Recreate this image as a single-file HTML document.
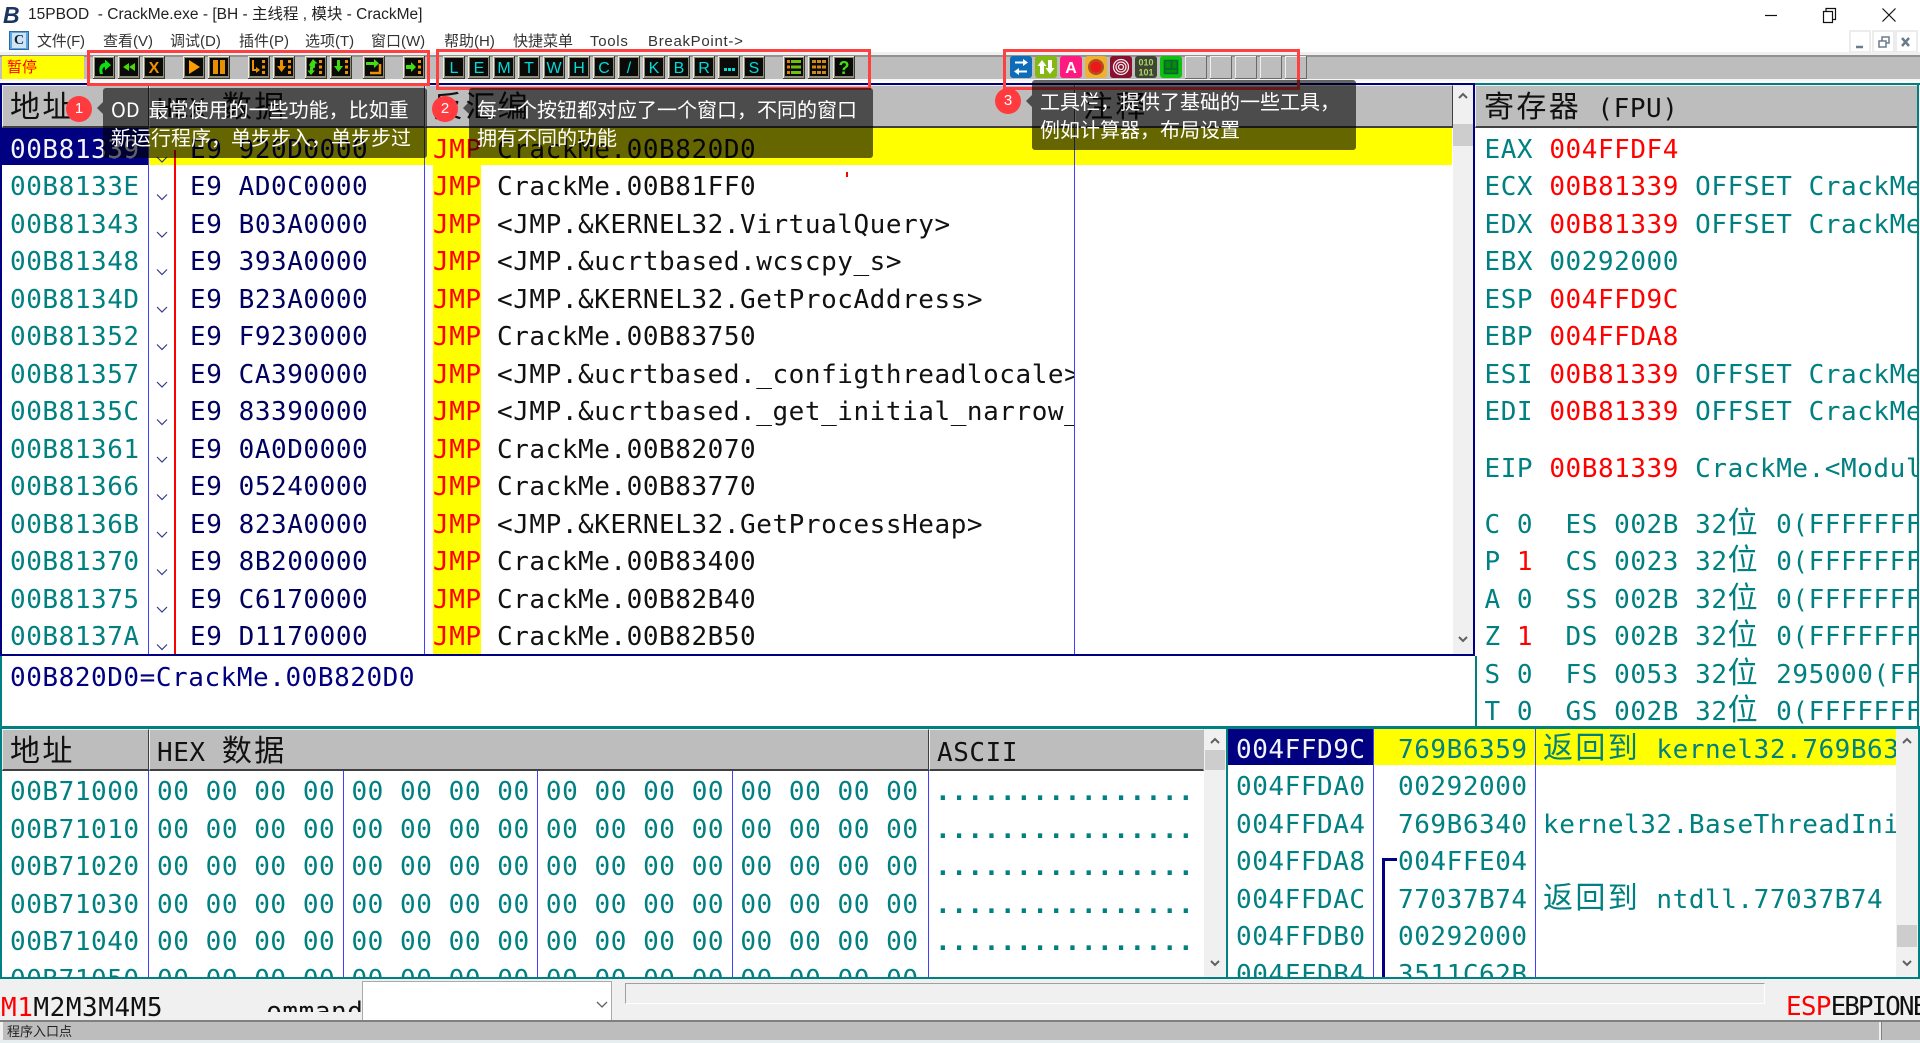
<!DOCTYPE html>
<html lang="zh-CN">
<head>
<meta charset="utf-8">
<title>15PBOD - CrackMe.exe</title>
<style>
html,body{margin:0;padding:0;background:#fff;}
body{position:relative;width:1920px;height:1043px;overflow:hidden;font-family:"Liberation Sans","Noto Sans CJK SC",sans-serif;color:#222;filter:blur(.35px);}
div,pre,span{box-sizing:border-box;}
.a{position:absolute;}
.menu{position:absolute;top:31px;font-size:15px;line-height:22px;white-space:nowrap;color:#333;}
.m{position:absolute;margin:0;font-family:"DejaVu Sans Mono","Noto Sans CJK SC",monospace;font-size:26px;letter-spacing:.55px;line-height:37.5px;white-space:pre;overflow:hidden;color:#008080;}
.c{font-family:"Noto Sans CJK SC",sans-serif;font-size:30px;letter-spacing:2.4px;line-height:0;}
.m i{font-style:normal;color:#f00;}
.m b{font-weight:normal;color:#f4f4ff;}
.h{position:absolute;background:#bdbdbd;border-top:1px solid #eee;border-left:1px solid #eee;border-bottom:2px solid #404040;border-right:1px solid #404040;}
.ht{position:absolute;margin:0;font-family:"DejaVu Sans Mono","Noto Sans CJK SC",monospace;font-size:26px;letter-spacing:.55px;white-space:pre;color:#111;line-height:40px;}
.ln{position:absolute;width:1px;background:#4040ff;}
.tip{position:absolute;background:rgba(0,0,0,.6);border-radius:3px;color:#fff;font-family:"Noto Sans CJK SC",sans-serif;font-size:20px;line-height:28px;white-space:pre;}
.arr{position:absolute;width:0;height:0;border-top:6px solid transparent;border-bottom:6px solid transparent;border-right:6px solid rgba(0,0,0,.6);}
.bad{position:absolute;width:26px;height:26px;border-radius:50%;background:#ff3b3f;color:#fff;font-size:15px;line-height:25px;text-align:center;font-family:"Liberation Sans",sans-serif;}
.rr{position:absolute;border:3px solid #ff4040;}
</style>
</head>
<body>

<!-- Title bar -->
<div class="a" style="left:3px;top:3px;font:italic bold 23px/24px 'Liberation Sans',sans-serif;color:#1a3560;">B</div>
<div class="a" style="left:28px;top:4px;font-size:15.5px;line-height:22px;white-space:pre;color:#222;">15PBOD  - CrackMe.exe - [BH - 主线程 , 模块 - CrackMe]</div>
<svg class="a" style="left:1760px;top:4px" width="150" height="22" viewBox="0 0 150 22" fill="none" stroke="#111" stroke-width="1.2">
<path d="M5 11.500H17"/>
<path d="M63.500 7.500h9v11h-9zM66 7.500V4.500h9.500v11h-3"/>
<path d="M122.500 4.500L135.500 17.500M135.500 4.500L122.500 17.500"/>
</svg>

<!-- Menu -->
<div class="a" style="left:9px;top:31px;width:20px;height:19px;background:#5da7dc;border:1px solid #2a6aa0;"></div>
<div class="a" style="left:12px;top:33px;width:14px;height:15px;background:#cfe4f5;color:#123;font:bold 14px/15px 'Liberation Serif',serif;text-align:center;">C</div>
<div class="menu" style="left:37px;letter-spacing:-.3px">文件(F)</div>
<div class="menu" style="left:103px">查看(V)</div>
<div class="menu" style="left:170px">调试(D)</div>
<div class="menu" style="left:239px">插件(P)</div>
<div class="menu" style="left:305px">选项(T)</div>
<div class="menu" style="left:371px">窗口(W)</div>
<div class="menu" style="left:444px">帮助(H)</div>
<div class="menu" style="left:513px">快捷菜单</div>
<div class="menu" style="left:590px;letter-spacing:.7px">Tools</div>
<div class="menu" style="left:648px;letter-spacing:.7px">BreakPoint-&gt;</div>

<!-- MDI buttons -->
<svg class="a" style="left:1849px;top:30px" width="71" height="23" viewBox="0 0 71 23" fill="none">
<g stroke="#e6e6e6" stroke-width="1.500"><rect x="1" y="1" width="20" height="21"/><rect x="24" y="1" width="21" height="21"/><rect x="47" y="1" width="21" height="21"/></g>
<path d="M7 17h7" stroke="#6b7b8c" stroke-width="2.500"/>
<path d="M30 11h7v6h-7zM33 11V7h7v6h-3" stroke="#6b7b8c" stroke-width="1.500"/>
<path d="M53 8l7 8M60 8l-7 8" stroke="#6b7b8c" stroke-width="2.500"/>
</svg>

<!-- Toolbar -->
<div class="a" style="left:0;top:52px;width:1920px;height:3px;background:#f0f0f0;"></div>
<div class="a" style="left:0;top:55px;width:1920px;height:2px;background:#929292;"></div>
<div class="a" style="left:0;top:57px;width:1920px;height:22px;background:#bdbdbd;"></div>
<div class="a" style="left:0;top:79px;width:1920px;height:2px;background:#f6f6f6;"></div>
<div class="a" style="left:2px;top:56px;width:82px;height:23px;background:#ff0;color:#f00;font-size:15px;line-height:22px;padding-left:5px;font-family:'Noto Sans CJK SC',sans-serif;">暂停</div>

<svg class="a" style="left:0;top:50px" width="1320" height="35" viewBox="0 0 1320 35" font-family="Liberation Sans,sans-serif">
<defs>
<g id="f"><rect x="0" y="0" width="22" height="23" fill="#3a3a30"/><rect x="0" y="0" width="21" height="22" fill="#f0ecdc"/><rect x="1" y="1" width="20" height="21" fill="#8e8a78"/><rect x="2" y="2" width="18" height="18" fill="#0a0a08"/></g>
<g id="g"><rect x="0" y="0" width="22" height="23" fill="#6a6a6a"/><rect x="0" y="0" width="21" height="22" fill="#f0f0f0"/><rect x="1" y="1" width="20" height="21" fill="#bdbdbd"/></g>
</defs>
<!-- group 1 -->
<g transform="translate(93,6)"><use href="#f"/><path d="M7 18C5 11 8 7 12 7V3.500L18 9l-6 5.500V11C10 11 8.500 13 10 18z" fill="#10e010"/></g>
<g transform="translate(118,6)"><use href="#f"/><path d="M11 7L5 11l6 4zM17 7l-6 4 6 4z" fill="#48d808"/></g>
<g transform="translate(143,6)"><use href="#f"/><text x="11" y="17" text-anchor="middle" font-size="16" font-weight="bold" fill="#f09000">X</text></g>
<g transform="translate(183,6)"><use href="#f"/><path d="M6 4l11 7L6 18z" fill="#ff9c00"/></g>
<g transform="translate(208,6)"><use href="#f"/><path d="M5 4h5v14H5zM12 4h5v14h-5z" fill="#e89000"/></g>
<g transform="translate(248,6)"><use href="#f"/><path d="M5 4v10h5" fill="none" stroke="#f09000" stroke-width="2"/><path d="M8 11l4 3-4 3z" fill="#f09000"/><path d="M14 4h3v3h-3zM14 9.500h3v3h-3zM14 15h3v3h-3z" fill="#f09000"/></g>
<g transform="translate(273,6)"><use href="#f"/><path d="M7 4h3v6h3l-4.500 6L4 10h3z" fill="#f09000"/><path d="M15 4h3v3h-3zM15 9.500h3v3h-3zM15 15h3v3h-3z" fill="#f09000"/></g>
<g transform="translate(305,6)"><use href="#f"/><path d="M8 3l4.500 4.500H10V11c0 1-1 1-3 2L4 9z" fill="#40d810"/><path d="M6 19l-3.500-4.500H5V11h3v3.500h2z" fill="#40d810"/><path d="M14 4h3v3h-3zM14 9.500h3v3h-3zM14 15h3v3h-3z" fill="#f09000"/></g>
<g transform="translate(330,6)"><use href="#f"/><path d="M7 4h3v6h3l-4.500 6L4 10h3z" fill="#40d810"/><path d="M15 4h3v3h-3zM15 9.500h3v3h-3zM15 15h3v3h-3z" fill="#f09000"/></g>
<g transform="translate(363,6)"><use href="#f"/><path d="M3 6h8V3l5 4.500-5 4.500V9H3z" fill="#40e010"/><path d="M17 8v9H7" fill="none" stroke="#f09000" stroke-width="2.500"/></g>
<g transform="translate(403,6)"><use href="#f"/><path d="M3 9h5V6l5 5-5 5v-3H3z" fill="#40e010"/><path d="M15 4h3v3h-3zM15 9.500h3v3h-3zM15 15h3v3h-3z" fill="#f09000"/></g>
<!-- group 2 -->
<g font-size="16" text-anchor="middle" fill="#00dcdc">
<g transform="translate(443,6)"><use href="#f"/><text x="11" y="17">L</text></g>
<g transform="translate(468,6)"><use href="#f"/><text x="11" y="17">E</text></g>
<g transform="translate(493,6)"><use href="#f"/><text x="11" y="17">M</text></g>
<g transform="translate(518,6)"><use href="#f"/><text x="11" y="17">T</text></g>
<g transform="translate(543,6)"><use href="#f"/><text x="11" y="17">W</text></g>
<g transform="translate(568,6)"><use href="#f"/><text x="11" y="17">H</text></g>
<g transform="translate(593,6)"><use href="#f"/><text x="11" y="17">C</text></g>
<g transform="translate(618,6)"><use href="#f"/><text x="11" y="17">/</text></g>
<g transform="translate(643,6)"><use href="#f"/><text x="11" y="17">K</text></g>
<g transform="translate(668,6)"><use href="#f"/><text x="11" y="17">B</text></g>
<g transform="translate(693,6)"><use href="#f"/><text x="11" y="17">R</text></g>
<g transform="translate(718,6)"><use href="#f"/><path d="M6 12h3v3H6zM10 12h3v3h-3zM14 12h3v3h-3z" fill="#00dcdc"/></g>
<g transform="translate(743,6)"><use href="#f"/><text x="11" y="17">S</text></g>
</g>
<g transform="translate(783,6)"><use href="#f"/><path d="M4 4h3v3H4zM4 9.500h3v3H4zM4 15h3v3H4z" fill="#e88000"/><path d="M8 4h10v3H8zM8 9.500h10v3H8zM8 15h10v3H8z" fill="#70c010"/></g>
<g transform="translate(808,6)"><use href="#f"/><path d="M4 4h4v3H4zM9 4h4v3H9zM14 4h4v3h-4zM4 9.500h4v3H4zM9 9.500h4v3H9zM14 9.500h4v3h-4zM4 15h4v3H4zM9 15h4v3H9zM14 15h4v3h-4z" fill="#d08818"/></g>
<g transform="translate(833,6)"><use href="#f"/><text x="11" y="18" text-anchor="middle" font-size="18" font-weight="bold" fill="#40e010">?</text></g>
<!-- group 3 -->
<g transform="translate(1010,6)"><rect width="22" height="22" rx="3" fill="#0f6cb8"/><path d="M5 5.500h8V3l5 3.500-5 3.500V7.500H5zM17 14.500H9V12l-5 3.500 5 3.500v-2.500h8z" fill="#fff"/></g>
<g transform="translate(1035,6)"><rect width="22" height="22" rx="3" fill="#84b814"/><path d="M7 4l4.500 6H9v8H5v-8H2.500zM15 18l-4.500-6H13V4h4v8h2.500z" fill="#fff"/></g>
<g transform="translate(1060,6)"><rect width="22" height="22" rx="3" fill="#ff1a80"/><text x="11" y="17" text-anchor="middle" font-size="16" font-weight="bold" fill="#fff">A</text></g>
<g transform="translate(1085,6)"><rect width="22" height="22" rx="3" fill="#f0b030"/><circle cx="11" cy="11" r="8" fill="#b05020"/><circle cx="11" cy="11" r="5.500" fill="#ee1818"/></g>
<g transform="translate(1110,6)"><rect width="22" height="22" rx="3" fill="#8a1030"/><g fill="none" stroke="#f4e8e8" stroke-width="1.300"><circle cx="11" cy="11" r="7.500"/><circle cx="11" cy="11" r="5"/><circle cx="11" cy="11" r="2.500"/></g></g>
<g transform="translate(1135,6)"><rect width="22" height="22" rx="3" fill="#3f4534"/><text x="11" y="9.500" text-anchor="middle" font-size="9" font-weight="bold" fill="#a8d860">010</text><text x="11" y="19.500" text-anchor="middle" font-size="9" font-weight="bold" fill="#a8d860">101</text></g>
<g transform="translate(1160,6)"><rect width="22" height="22" rx="3" fill="#10c010"/><rect x="4" y="4" width="14" height="14" fill="#0a8a0a"/><path d="M4.500 4.500h13v13h-13zM11.500 4.500v8.500M4.500 13h13" fill="none" stroke="#063" stroke-width="1.600"/></g>
<use href="#g" x="1185" y="6"/><use href="#g" x="1210" y="6"/><use href="#g" x="1235" y="6"/><use href="#g" x="1260" y="6"/><use href="#g" x="1285" y="6"/>
</svg>

<!-- CPU panes frame -->
<div class="a" style="left:0;top:83px;width:1475px;height:2px;background:#000080;"></div>
<div class="a" style="left:0;top:85px;width:2px;height:571px;background:#000080;"></div>
<div class="a" style="left:0;top:654px;width:1475px;height:2px;background:#000080;"></div>
<div class="a" style="left:1473px;top:83px;width:2px;height:573px;background:#000080;"></div>

<!-- disasm header -->
<div class="h" style="left:2px;top:85px;width:147px;height:43px;"></div>
<div class="h" style="left:149px;top:85px;width:276px;height:43px;"></div>
<div class="h" style="left:425px;top:85px;width:650px;height:43px;"></div>
<div class="h" style="left:1075px;top:85px;width:378px;height:43px;"></div>
<pre class="ht" style="left:10px;top:89px;"><span class="c">地址</span></pre>
<pre class="ht" style="left:157px;top:89px;">HEX <span class="c">数据</span></pre>
<pre class="ht" style="left:433px;top:89px;"><span class="c">反汇编</span></pre>
<pre class="ht" style="left:1083px;top:89px;"><span class="c">注释</span></pre>

<!-- disasm rows -->
<div class="a" style="left:2px;top:128px;width:146px;height:37px;background:#000080;"></div>
<div class="a" style="left:148px;top:128px;width:1304px;height:37px;background:#ff0;"></div>
<div class="a" style="left:433px;top:128px;width:48px;height:526px;background:#ff0;"></div>
<div class="ln" style="left:148px;top:128px;height:526px;"></div>
<div class="ln" style="left:424px;top:128px;height:526px;"></div>
<div class="ln" style="left:1074px;top:128px;height:526px;"></div>
<div class="a" style="left:174px;top:150px;width:1.500px;height:504px;background:#f00;"></div>
<div class="a" style="left:846px;top:172px;width:2px;height:5px;background:#f00;"></div>

<pre class="m" style="left:10px;top:131.500px;width:138px;height:522px;"><b>00B81339</b>
00B8133E
00B81343
00B81348
00B8134D
00B81352
00B81357
00B8135C
00B81361
00B81366
00B8136B
00B81370
00B81375
00B8137A</pre>
<svg class="a" style="left:155px;top:128px" width="14" height="526" viewBox="0 0 14 526" fill="none" stroke="#333a90" stroke-width="1.200">
<path d="M2 29l5 5 5-5M2 66.500l5 5 5-5M2 104l5 5 5-5M2 141.500l5 5 5-5M2 179l5 5 5-5M2 216.500l5 5 5-5M2 254l5 5 5-5M2 291.500l5 5 5-5M2 329l5 5 5-5M2 366.500l5 5 5-5M2 404l5 5 5-5M2 441.500l5 5 5-5M2 479l5 5 5-5M2 516.500l5 5 5-5"/>
</svg>
<pre class="m" style="left:190px;top:131.500px;width:230px;height:522px;color:#000060;">E9 920D0000
E9 AD0C0000
E9 B03A0000
E9 393A0000
E9 B23A0000
E9 F9230000
E9 CA390000
E9 83390000
E9 0A0D0000
E9 05240000
E9 823A0000
E9 8B200000
E9 C6170000
E9 D1170000</pre>
<pre class="m" style="left:433px;top:131.500px;width:50px;height:522px;color:#f00;">JMP
JMP
JMP
JMP
JMP
JMP
JMP
JMP
JMP
JMP
JMP
JMP
JMP
JMP</pre>
<pre class="m" style="left:497px;top:131.500px;width:577px;height:522px;color:#111;">CrackMe.00B820D0
CrackMe.00B81FF0
&lt;JMP.&amp;KERNEL32.VirtualQuery&gt;
&lt;JMP.&amp;ucrtbased.wcscpy_s&gt;
&lt;JMP.&amp;KERNEL32.GetProcAddress&gt;
CrackMe.00B83750
&lt;JMP.&amp;ucrtbased._configthreadlocale&gt;
&lt;JMP.&amp;ucrtbased._get_initial_narrow_environment&gt;
CrackMe.00B82070
CrackMe.00B83770
&lt;JMP.&amp;KERNEL32.GetProcessHeap&gt;
CrackMe.00B83400
CrackMe.00B82B40
CrackMe.00B82B50</pre>

<!-- disasm scrollbar -->
<div class="a" style="left:1453px;top:85px;width:20px;height:569px;background:#f0f0f0;"></div>
<div class="a" style="left:1453px;top:124px;width:20px;height:22px;background:#cdcdcd;"></div>
<svg class="a" style="left:1453px;top:85px" width="20" height="569" viewBox="0 0 20 569" fill="none" stroke="#606060" stroke-width="2"><path d="M6 13l4-4 4 4M6 552l4 4 4-4"/></svg>

<!-- info pane -->
<pre class="m" style="left:10px;top:659.500px;width:1400px;color:#000080;">00B820D0=CrackMe.00B820D0</pre>

<!-- Registers -->
<div class="a" style="left:1475px;top:83px;width:445px;height:2px;background:#008080;"></div>
<div class="a" style="left:1917px;top:85px;width:2px;height:643px;background:#008080;"></div>
<div class="a" style="left:1475px;top:656px;width:2px;height:72px;background:#008080;"></div>
<div class="a" style="left:0;top:656px;width:2px;height:323px;background:#008080;"></div>
<div class="a" style="left:0;top:726px;width:1920px;height:3px;background:#008080;"></div>
<div class="a" style="left:1475px;top:85px;width:442px;height:43px;background:#bdbdbd;border-bottom:2px solid #404040;border-top:1px solid #eee;border-left:1px solid #eee;"></div>
<pre class="ht" style="left:1484px;top:89px;"><span class="c">寄存器</span> (FPU)</pre>
<pre class="m" style="left:1484.500px;top:131.500px;width:432px;height:310px;">EAX <i>004FFDF4</i>
ECX <i>00B81339</i> OFFSET CrackMe.&lt;ModuleEntryPoint&gt;
EDX <i>00B81339</i> OFFSET CrackMe.&lt;ModuleEntryPoint&gt;
EBX 00292000
ESP <i>004FFD9C</i>
EBP <i>004FFDA8</i>
ESI <i>00B81339</i> OFFSET CrackMe.&lt;ModuleEntryPoint&gt;
EDI <i>00B81339</i> OFFSET CrackMe.&lt;ModuleEntryPoint&gt;</pre>
<pre class="m" style="left:1484.500px;top:450.500px;width:432px;height:38px;">EIP <i>00B81339</i> CrackMe.&lt;ModuleEntryPoint&gt;</pre>
<pre class="m" style="left:1484.500px;top:506.500px;width:432px;height:219.500px;">C 0  ES 002B 32<span class="c">位</span> 0(FFFFFFFF)
P <i>1</i>  CS 0023 32<span class="c">位</span> 0(FFFFFFFF)
A 0  SS 002B 32<span class="c">位</span> 0(FFFFFFFF)
Z <i>1</i>  DS 002B 32<span class="c">位</span> 0(FFFFFFFF)
S 0  FS 0053 32<span class="c">位</span> 295000(FFF)
T 0  GS 002B 32<span class="c">位</span> 0(FFFFFFFF)</pre>

<!-- Dump -->
<div class="h" style="left:2px;top:729px;width:147px;height:42px;"></div>
<div class="h" style="left:149px;top:729px;width:780px;height:42px;"></div>
<div class="h" style="left:929px;top:729px;width:275px;height:42px;border-right:1px solid #bdbdbd;"></div>
<pre class="ht" style="left:10px;top:733px;"><span class="c">地址</span></pre>
<pre class="ht" style="left:157px;top:733px;">HEX <span class="c">数据</span></pre>
<pre class="ht" style="left:937px;top:733px;">ASCII</pre>
<div class="ln" style="left:148px;top:771px;height:206px;"></div>
<div class="ln" style="left:343px;top:771px;height:206px;"></div>
<div class="ln" style="left:537px;top:771px;height:206px;"></div>
<div class="ln" style="left:732px;top:771px;height:206px;"></div>
<div class="ln" style="left:928px;top:771px;height:206px;"></div>
<pre class="m" style="left:10px;top:774px;width:138px;height:203px;">00B71000
00B71010
00B71020
00B71030
00B71040
00B71050</pre>
<pre class="m" style="left:157px;top:774px;width:770px;height:203px;">00 00 00 00 00 00 00 00 00 00 00 00 00 00 00 00
00 00 00 00 00 00 00 00 00 00 00 00 00 00 00 00
00 00 00 00 00 00 00 00 00 00 00 00 00 00 00 00
00 00 00 00 00 00 00 00 00 00 00 00 00 00 00 00
00 00 00 00 00 00 00 00 00 00 00 00 00 00 00 00
00 00 00 00 00 00 00 00 00 00 00 00 00 00 00 00</pre>
<pre class="m" style="left:935px;top:774px;width:268px;height:203px;font-weight:bold;">................
................
................
................
................
................</pre>
<div class="a" style="left:1204px;top:729px;width:22px;height:248px;background:#f0f0f0;"></div>
<div class="a" style="left:1205px;top:750px;width:20px;height:20px;background:#cdcdcd;"></div>
<svg class="a" style="left:1204px;top:729px" width="22" height="248" viewBox="0 0 22 248" fill="none" stroke="#606060" stroke-width="2"><path d="M7 14l4-4 4 4M7 232l4 4 4-4"/></svg>
<div class="a" style="left:1226px;top:729px;width:2px;height:248px;background:#008080;"></div>

<!-- Stack -->
<div class="a" style="left:1228px;top:729px;width:145px;height:36px;background:#000080;"></div>
<div class="a" style="left:1374px;top:729px;width:522px;height:36px;background:#ff0;"></div>
<div class="ln" style="left:1373px;top:729px;height:248px;"></div>
<div class="ln" style="left:1535px;top:729px;height:248px;"></div>
<pre class="m" style="left:1236px;top:731.500px;width:136px;height:245.500px;"><b>004FFD9C</b>
004FFDA0
004FFDA4
004FFDA8
004FFDAC
004FFDB0
004FFDB4</pre>
<pre class="m" style="left:1398px;top:731.500px;width:136px;height:245.500px;">769B6359
00292000
769B6340
004FFE04
77037B74
00292000
3511C62B</pre>
<div class="a" style="left:1382px;top:858px;width:15px;height:2.500px;background:#000080;"></div>
<div class="a" style="left:1382px;top:858px;width:2.500px;height:119px;background:#000080;"></div>
<pre class="m" style="left:1543px;top:731.500px;width:353px;height:245.500px;"><span class="c">返回到</span> kernel32.769B6359

kernel32.BaseThreadInitThunk

<span class="c">返回到</span> ntdll.77037B74</pre>
<div class="a" style="left:1896px;top:729px;width:22px;height:248px;background:#f0f0f0;"></div>
<div class="a" style="left:1897px;top:925px;width:20px;height:22px;background:#cdcdcd;"></div>
<svg class="a" style="left:1896px;top:729px" width="22" height="248" viewBox="0 0 22 248" fill="none" stroke="#606060" stroke-width="2"><path d="M7 14l4-4 4 4M7 232l4 4 4-4"/></svg>
<div class="a" style="left:1918px;top:729px;width:2px;height:250px;background:#008080;"></div>
<div class="a" style="left:0;top:977px;width:1920px;height:2px;background:#008080;"></div>

<!-- Bottom command bar -->
<div class="a" style="left:0;top:979px;width:1920px;height:41px;background:#f0f0f0;"></div>
<pre class="m" style="left:1px;top:989.500px;width:200px;height:30px;color:#111;"><i>M1</i>M2M3M4M5</pre>
<div class="a" style="left:266px;top:985px;width:96px;height:27px;overflow:hidden;"><pre class="m" style="left:-16px;top:9px;width:120px;color:#111;">Command</pre></div>
<div class="a" style="left:362px;top:981px;width:250px;height:39px;background:#fff;border:1px solid #aaa;border-bottom:0;"></div>
<svg class="a" style="left:595px;top:1000px" width="14" height="10" viewBox="0 0 14 10" fill="none" stroke="#606060" stroke-width="1.300"><path d="M2 2l5 5 5-5"/></svg>
<div class="a" style="left:625px;top:983px;width:1140px;height:21px;border-top:1px solid #a0a0a0;border-left:1px solid #a0a0a0;border-right:1px solid #fff;border-bottom:1px solid #fff;"></div>
<pre class="m" style="left:1786px;top:988.500px;width:134px;height:31px;color:#111;letter-spacing:-2px;"><i style="letter-spacing:-.8px">ESP</i>EBPIONE</pre>

<!-- Status bar -->
<div class="a" style="left:0;top:1020px;width:1920px;height:2px;background:#808080;"></div>
<div class="a" style="left:0;top:1022px;width:1920px;height:18px;background:#bdbdbd;"></div>
<div class="a" style="left:0;top:1022px;width:3px;height:18px;background:#f0f0f0;"></div>
<div class="a" style="left:1879px;top:1022px;width:2px;height:18px;background:#f0f0f0;"></div>
<div class="a" style="left:1881px;top:1022px;width:1px;height:18px;background:#808080;"></div>
<div class="a" style="left:0;top:1040px;width:1920px;height:3px;background:#e6eef0;"></div>
<div class="a" style="left:7px;top:1021px;font-size:13px;line-height:19px;color:#222;font-family:'Noto Sans CJK SC',sans-serif;">程序入口点</div>

<!-- Red highlight rectangles -->
<div class="rr" style="left:87px;top:50px;width:343px;height:36px;"></div>
<div class="rr" style="left:436px;top:49px;width:435px;height:41px;"></div>
<div class="rr" style="left:1003px;top:49px;width:297px;height:41px;"></div>

<!-- Tooltips -->
<div class="tip" style="left:103px;top:88px;width:324px;height:70px;padding:7px 0 0 8px;word-spacing:4.500px;">OD 最常使用的一些功能，比如重
新运行程序，单步步入，单步步过</div>
<div class="arr" style="left:97px;top:102px;"></div>
<div class="bad" style="left:66px;top:96px;">1</div>

<div class="tip" style="left:469px;top:88px;width:404px;height:70px;padding:7px 0 0 8px;">每一个按钮都对应了一个窗口，不同的窗口
拥有不同的功能</div>
<div class="arr" style="left:463px;top:102px;"></div>
<div class="bad" style="left:432px;top:96px;">2</div>

<div class="tip" style="left:1032px;top:80px;width:324px;height:70px;padding:7px 0 0 8px;">工具栏，提供了基础的一些工具，
例如计算器，布局设置</div>
<div class="arr" style="left:1026px;top:95px;"></div>
<div class="bad" style="left:995px;top:88px;">3</div>

</body>
</html>
